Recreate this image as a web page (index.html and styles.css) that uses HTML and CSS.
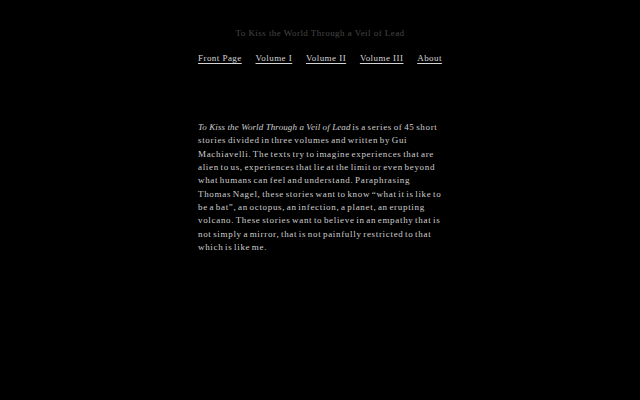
FILE: index.html
```html
<!DOCTYPE html>
<html>
<head>
<meta charset="utf-8">
<link rel="stylesheet" href="styles.css">
</head>
<body>
<div class="page">
  <header class="header">
    <div class="site-title">To Kiss the World Through a Veil of Lead</div>
    <nav class="nav">
      <a href="#">Front Page</a>
      <a href="#">Volume I</a>
      <a href="#">Volume II</a>
      <a href="#">Volume III</a>
      <a href="#">About</a>
    </nav>
  </header>
  <main class="content">
    <p><em>To Kiss the World Through a Veil of Lead</em> is a series of 45 short stories divided in three volumes and written by Gui Machiavelli. The texts try to imagine experiences that are alien to us, experiences that lie at the limit or even beyond what humans can feel and understand. Paraphrasing Thomas Nagel, these stories want to know “what it is like to be a bat”, an octopus, an infection, a planet, an erupting volcano. These stories want to believe in an empathy that is not simply a mirror, that is not painfully restricted to that which is like me.</p>
  </main>
</div>
</body>
</html>
```
FILE: styles.css
```css
html, body {
  margin: 0;
  padding: 0;
  background: #000;
}
body {
  font-family: "Liberation Serif", "DejaVu Serif", serif;
  color: #cfcfcf;
  font-size: 9px;
  letter-spacing: 0.45px;
}
.page {
  width: 244px;
  margin: 0 auto;
  padding-top: 27px;
}
.header {
  display: flex;
  flex-direction: column;
  align-items: center;
}
.site-title {
  color: #474747;
  font-size: 9px;
  line-height: 12px;
}
.nav {
  display: flex;
  justify-content: space-between;
  width: 100%;
  margin-top: 13px;
  line-height: 12px;
}
.nav a {
  color: #d4d4d4;
  text-decoration: underline;
  text-underline-offset: 2px;
}
.content {
  margin-top: 57px;
}
.content p {
  margin: 0;
  line-height: 13.35px;
  letter-spacing: 0.68px;
  word-spacing: -1.3px;
}
.content em {
  letter-spacing: 0.1px;
  word-spacing: 0;
}
```
